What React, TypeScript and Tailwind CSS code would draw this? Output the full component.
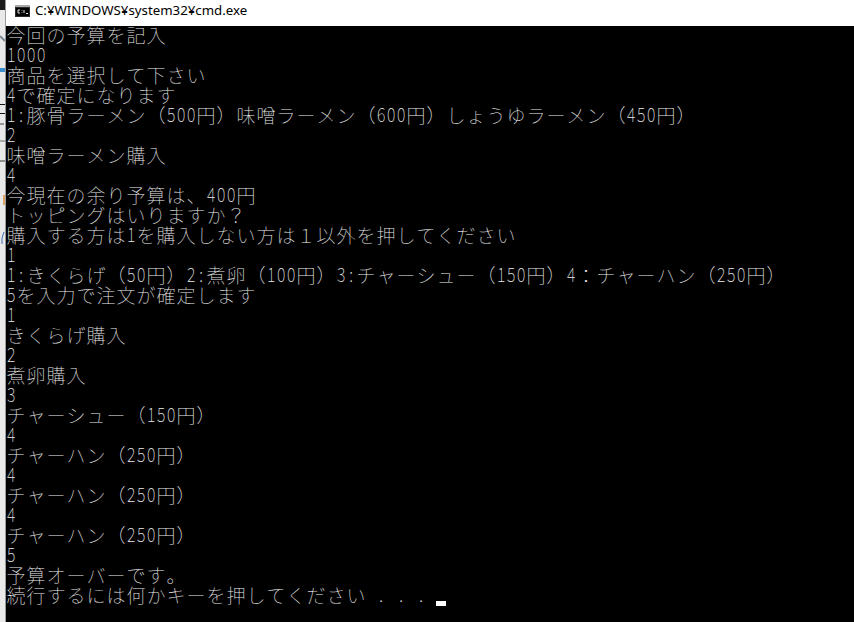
const lines = [
  "今回の予算を記入",
  "1000",
  "商品を選択して下さい",
  "4で確定になります",
  "1:豚骨ラーメン（500円）味噌ラーメン（600円）しょうゆラーメン（450円）",
  "2",
  "味噌ラーメン購入",
  "4",
  "今現在の余り予算は、400円",
  "トッピングはいりますか？",
  "購入する方は1を購入しない方は１以外を押してください",
  "1",
  "1:きくらげ（50円）2:煮卵（100円）3:チャーシュー（150円）4：チャーハン（250円）",
  "5を入力で注文が確定します",
  "1",
  "きくらげ購入",
  "2",
  "煮卵購入",
  "3",
  "チャーシュー（150円）",
  "4",
  "チャーハン（250円）",
  "4",
  "チャーハン（250円）",
  "4",
  "チャーハン（250円）",
  "5",
  "予算オーバーです。",
  "続行するには何かキーを押してください . . . ",
];

// console grid: ascii takes one 10px cell, everything else takes two
function ConsoleLine({ text, cursor }: { text: string; cursor?: boolean }) {
  return (
    <div className="flex h-[20px] leading-[18px]">
      {Array.from(text).map((ch, i) =>
        /[\x20-\x7e]/.test(ch) ? (
          <span key={i} className="inline-block w-[10px] shrink-0 scale-x-[0.8] text-center text-[20px] leading-[16px]">
            {ch}
          </span>
        ) : (
          <span key={i} className="inline-block w-[20px] shrink-0 text-center">
            {ch}
          </span>
        ),
      )}
      {cursor && <span className="mt-[15px] h-[5px] w-[10px] bg-white" />}
    </div>
  );
}

function CmdIcon() {
  return (
    <svg width="15" height="12" viewBox="0 0 15 12" className="shrink-0">
      <rect x="0" y="0" width="15" height="12" fill="#2b2b2b" />
      <rect x="0" y="0" width="15" height="2" fill="#a9a9a9" />
      <rect x="1" y="3" width="13" height="8" fill="#000" />
      <path d="M5 5H3v3h2M7 5.5v.5M7 7.5v.5M9 5v3M11 8.5h2" stroke="#e0e0e0" strokeWidth="1" fill="none" />
    </svg>
  );
}

function BehindStrip() {
  return (
    <svg width="6" height="622" viewBox="0 0 6 622" className="shrink-0">
      <rect width="6" height="622" fill="#e9e9e9" />
      <rect width="5" height="10" fill="#1c1c1c" />
      <rect x="5" width="1" height="622" fill="#9a9a9a" />
      <path d="M0 36l5 5" stroke="#7d8a96" strokeWidth="2" />
      <rect y="68" width="5" height="4" fill="#3b8fd0" />
      <rect y="104" width="5" height="1" fill="#111" />
      <rect y="113" width="5" height="1" fill="#111" />
      <path d="M0 124h4" stroke="#444" strokeWidth="1" />
      <rect y="140" width="5" height="2" fill="#a8a8a8" />
      <rect y="160" width="5" height="2" fill="#8f8f8f" />
      <rect x="3" y="195" width="2" height="10" fill="#d9a36a" />
      <path d="M4 232q-3 6-2 12" stroke="#3f6db3" strokeWidth="1" fill="none" />
    </svg>
  );
}

export default function App() {
  return (
    <div className="flex h-[622px] w-[854px] overflow-hidden bg-black">
      <BehindStrip />
      <div className="flex min-w-0 flex-1 flex-col">
        <div className="flex h-[26px] shrink-0 items-center gap-[5px] bg-white pb-[4px] pl-[9px] font-['Noto_Sans',sans-serif] text-[13.25px] text-black">
          <CmdIcon />
          <span>C:¥WINDOWS¥system32¥cmd.exe</span>
        </div>
        <div className="flex-1 font-['Noto_Sans_CJK_JP',sans-serif] text-[19px] font-thin text-[#ececec]">
          {lines.map((line, i) => (
            <ConsoleLine key={i} text={line} cursor={i === lines.length - 1} />
          ))}
        </div>
      </div>
    </div>
  );
}
